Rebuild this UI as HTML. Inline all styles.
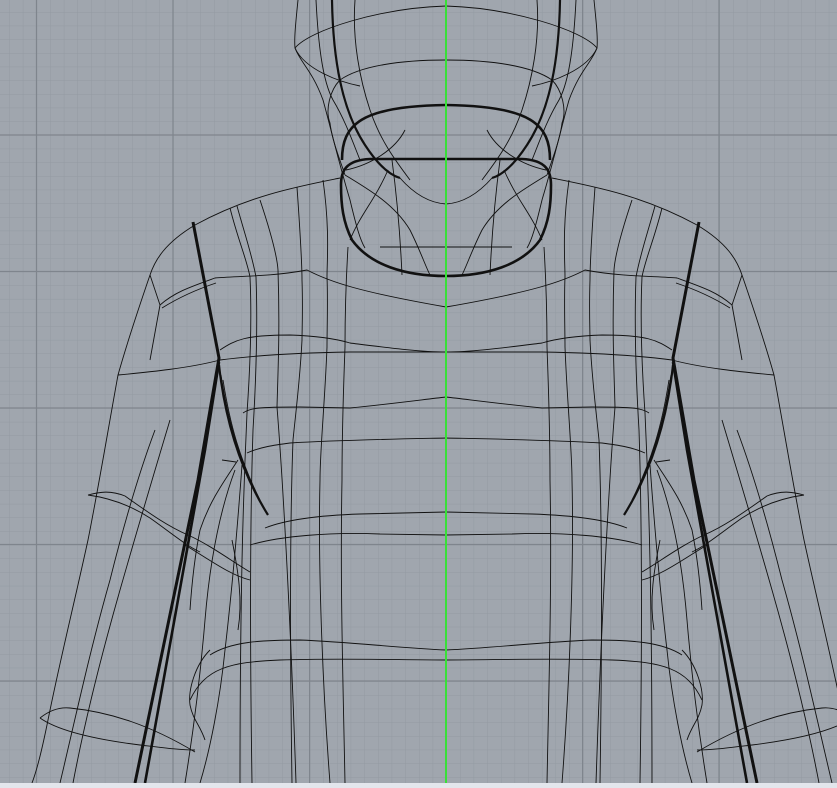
<!DOCTYPE html>
<html><head><meta charset="utf-8"><style>
html,body{margin:0;padding:0;width:837px;height:788px;overflow:hidden;background:#a0a6ae}
svg{display:block}
</style></head><body>
<svg width="837" height="788" viewBox="0 0 837 788" xmlns="http://www.w3.org/2000/svg">
<defs>
<pattern id="minor" x="9.18" y="12.06" width="13.66" height="13.66" patternUnits="userSpaceOnUse">
<path d="M0 0V13.66M0 0H13.66" stroke="#939aa2" stroke-width="1" fill="none"/>
</pattern>
<g id="half" fill="none" stroke="#111" stroke-width="0.9">
<path d="M298,0 C296,20 294,38 295,48 C300,62 312,70 323,100 C330,125 338,160 350,200 C356,225 360,240 365,248"/>
<path d="M295,48 C310,30 380,8 446,6"/>
<path d="M295,48 C305,70 340,82 360,86"/>
<path d="M340,80 C360,66 400,60 446,60"/>
<path d="M340,80 C330,90 325,110 330,123 C332,140 340,160 345,175"/>
<path d="M355,0 C352,40 360,80 370,110 C380,140 395,160 410,180"/>
<path d="M316,0 C318,40 322,80 333,100 C345,120 352,140 360,160"/>
<path d="M400,178 C415,195 430,203 446,204"/>
<path d="M346,170 C370,165 395,150 405,130"/>
<path d="M380,247 L446,247"/>
<path d="M350,240 C360,215 375,200 388,170"/>
<path d="M392,160 C396,190 400,230 402,275"/>
<path d="M345,175 C370,190 395,205 410,230 C420,250 425,265 430,275"/>
<path d="M340,178 C300,186 250,195 195,225 C165,243 155,260 150,275"/>
<path d="M150,275 L160,305 L150,360"/>
<path d="M150,275 C138,310 125,350 118,375 C108,430 98,490 88,540 C75,600 60,660 48,720 C42,750 37,770 32,783"/>
<path d="M160,305 C175,292 190,287 215,278 C235,276 270,277 307,270 C330,282 360,292 446,307"/>
<path d="M162,308 C178,298 195,290 216,283"/>
<path d="M118,375 C150,372 190,368 220,360 C250,356 290,353 350,352 L446,352"/>
<path d="M220,350 C235,340 245,335 290,335 C320,336 340,340 350,343 C390,348 420,352 446,352"/>
<path d="M243,413 C250,408 258,407 300,407 L350,408 C390,404 420,400 446,397"/>
<path d="M247,453 C260,447 275,445 290,443 C340,440 400,439 446,438"/>
<path d="M265,528 C290,518 330,515 360,514 L446,512"/>
<path d="M250,545 C280,536 330,532 380,534 L446,535"/>
<path d="M210,655 C230,642 260,640 300,640 C350,642 400,648 446,650"/>
<path d="M190,700 C205,668 230,662 280,660 C340,658 400,660 446,660"/>
<path d="M230,208 C238,240 247,260 250,277 C252,320 250,370 247,413 C243,500 240,600 240,783"/>
<path d="M237,206 C245,235 252,255 256,277 C258,330 256,380 253,430 C250,520 250,650 252,783"/>
<path d="M260,200 C270,230 277,255 278,270 C280,330 278,370 277,407 C282,470 290,600 296,783"/>
<path d="M297,187 C300,230 302,260 302,280 C303,310 302,330 302,340 C300,380 296,410 293,440 C290,520 290,650 292,783"/>
<path d="M323,180 C330,230 327,260 327,277 C328,300 327,330 327,347 C325,400 320,450 320,480 C318,560 322,680 330,783"/>
<path d="M348,247 C346,280 345,320 345,347 C343,400 342,440 342,480 C340,580 343,680 345,783"/>
<path d="M88,495 C100,492 110,490 125,496 C145,510 165,525 188,535 C210,545 230,560 250,572"/>
<path d="M88,495 C110,498 130,505 150,518 C170,532 185,545 200,552"/>
<path d="M238,460 C225,480 210,500 200,530 C195,555 192,580 190,610"/>
<path d="M235,470 C220,510 210,560 205,620 C200,680 192,740 185,783"/>
<path d="M242,465 C238,520 232,590 225,650 C220,700 210,750 200,783"/>
<path d="M232,540 C238,570 243,600 238,630"/>
<path d="M185,545 C210,560 230,575 250,580"/>
<path d="M73,783 C85,720 100,660 120,590 C140,520 155,470 170,420"/>
<path d="M60,783 C75,720 90,650 110,580 C125,520 140,470 155,430"/>
<path d="M210,650 C195,665 188,690 190,705 C193,720 200,725 205,740"/>
<path d="M40,718 C50,710 60,707 70,708 C110,712 150,725 195,752"/>
<path d="M40,718 C60,732 100,740 140,745 C165,748 180,750 195,750"/>
<path d="M193,222 L219,358 L198,480 L135,783" stroke-width="3"/>
<path d="M219,362 L205,450 L145,783" stroke-width="2.6"/>
<path d="M219,365 C225,420 240,470 268,515" stroke-width="2.2"/>
<path d="M221,375 C228,420 238,455 255,490"/>
<path d="M223,380 C230,425 240,460 260,500"/>
<path d="M222,460 L236,462"/>
<path d="M332,0 C333,60 342,110 365,145 C378,165 390,175 400,178" stroke-width="2.2"/>
<path d="M342,160 C342,125 360,106 446,105" stroke-width="2.6"/>
<path d="M446,159 L370,159 C345,160 341,172 341,185 C341,205 343,222 352,240 C370,265 405,276 446,276" stroke-width="2.6"/>
</g>
</defs>
<rect width="837" height="788" fill="#a0a6ae"/>
<rect width="837" height="788" fill="url(#minor)"/>
<g stroke="#7f858d" stroke-width="1.2">
<path d="M36.5 0V788M173 0V788M309.6 0V788M582.6 0V788M719 0V788"/>
<path d="M0 135H837M0 271.5H837M0 408H837M0 544.5H837M0 681H837"/>
</g>
<use href="#half"/>
<use href="#half" transform="translate(892,0) scale(-1,1)"/>
<line x1="446" y1="0" x2="446" y2="784" stroke="#38e038" stroke-width="2"/>
<rect x="0" y="783" width="837" height="5" fill="#e3e6ec"/>
</svg>
</body></html>
